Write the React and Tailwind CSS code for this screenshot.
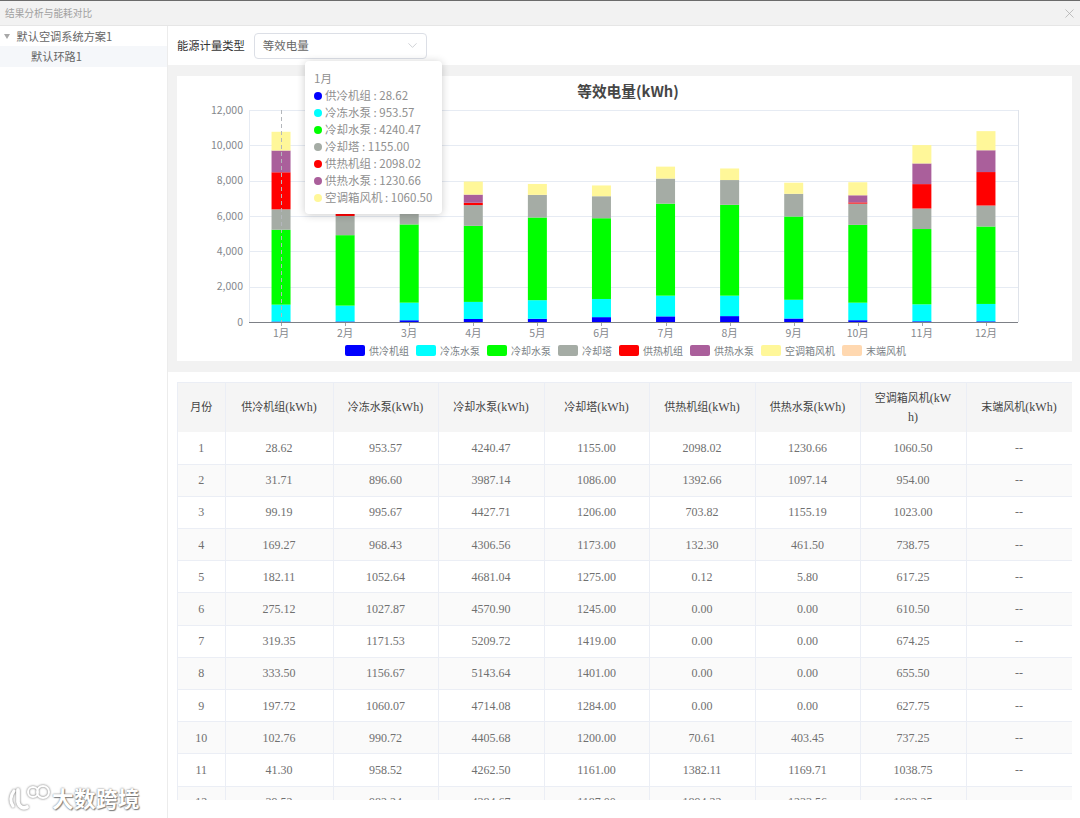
import { ChevronDown, X } from 'lucide-react';

const SANS = { fontFamily: '"Noto Sans CJK SC", "Noto Sans", sans-serif' };

const series = [
  { name: '供冷机组', color: '#0000ff' },
  { name: '冷冻水泵', color: '#00ffff' },
  { name: '冷却水泵', color: '#00ff00' },
  { name: '冷却塔', color: '#a5aca5' },
  { name: '供热机组', color: '#ff0000' },
  { name: '供热水泵', color: '#aa5f9b' },
  { name: '空调箱风机', color: '#fff799' },
  { name: '末端风机', color: '#ffd8b0' },
];

const rows = [
  ['1', '28.62', '953.57', '4240.47', '1155.00', '2098.02', '1230.66', '1060.50'],
  ['2', '31.71', '896.60', '3987.14', '1086.00', '1392.66', '1097.14', '954.00'],
  ['3', '99.19', '995.67', '4427.71', '1206.00', '703.82', '1155.19', '1023.00'],
  ['4', '169.27', '968.43', '4306.56', '1173.00', '132.30', '461.50', '738.75'],
  ['5', '182.11', '1052.64', '4681.04', '1275.00', '0.12', '5.80', '617.25'],
  ['6', '275.12', '1027.87', '4570.90', '1245.00', '0.00', '0.00', '610.50'],
  ['7', '319.35', '1171.53', '5209.72', '1419.00', '0.00', '0.00', '674.25'],
  ['8', '333.50', '1156.67', '5143.64', '1401.00', '0.00', '0.00', '655.50'],
  ['9', '197.72', '1060.07', '4714.08', '1284.00', '0.00', '0.00', '627.75'],
  ['10', '102.76', '990.72', '4405.68', '1200.00', '70.61', '403.45', '737.25'],
  ['11', '41.30', '958.52', '4262.50', '1161.00', '1382.11', '1169.71', '1038.75'],
  ['12', '39.52', '982.24', '4384.67', '1187.00', '1894.22', '1233.56', '1082.25'],
];

const headers = ['供冷机组', '冷冻水泵', '冷却水泵', '冷却塔', '供热机组', '供热水泵', '空调箱风机', '末端风机'];
const colWidths = [47, 108, 105, 106, 105, 106, 105, 106, 106];

/* chart coordinates are relative to the card */
const plot = { left: 72, right: 841, top: 34, bottom: 246 };
const ticks = [0, 2000, 4000, 6000, 8000, 10000, 12000];
const yOf = (v) => plot.bottom - (v / 12000) * (plot.bottom - plot.top);
const step = (plot.right - plot.left) / 12;

function BarChart() {
  return (
    <svg width="895" height="269" className="block" style={SANS}>
      <text x="451" y="21" textAnchor="middle" fontSize="14.7" fontWeight="700" fill="#464646">等效电量(kWh)</text>
      {ticks.map((t) => (
        <g key={t}>
          {t > 0 && <line x1={plot.left} x2={plot.right} y1={Math.round(yOf(t)) + 0.5} y2={Math.round(yOf(t)) + 0.5} stroke="#e6ebf3" />}
          <text x={plot.left - 6} y={yOf(t) + 3.5} textAnchor="end" fontSize="10.5" fill="#85888d">{t.toLocaleString('en-US')}</text>
        </g>
      ))}
      <line x1={plot.left + 0.5} x2={plot.left + 0.5} y1={plot.top} y2={plot.bottom} stroke="#e6ebf3" />
      <line x1={plot.right + 0.5} x2={plot.right + 0.5} y1={plot.top} y2={plot.bottom} stroke="#dfe3ea" />
      {rows.map((row, i) => {
        const cx = plot.left + step * (i + 0.5);
        let total = 0;
        return (
          <g key={row[0]}>
            {row.slice(1).map((val, k) => {
              const v = Number(val);
              const y1 = yOf(total);
              total += v;
              return <rect key={k} x={cx - 9.5} width="19" y={yOf(total)} height={y1 - yOf(total)} fill={series[k].color} />;
            })}
            <line x1={Math.round(cx) + 0.5} x2={Math.round(cx) + 0.5} y1={plot.bottom} y2={plot.bottom + 4} stroke="#a3a6ab" />
            <text x={cx} y={plot.bottom + 15} textAnchor="middle" fontSize="10.5" fill="#85888d">{row[0]}月</text>
          </g>
        );
      })}
      <line x1={plot.left} x2={plot.right} y1={plot.bottom + 0.5} y2={plot.bottom + 0.5} stroke="#7d8086" />
      <line x1={Math.round(plot.left + step / 2) + 0.5} x2={Math.round(plot.left + step / 2) + 0.5} y1={plot.top} y2={plot.bottom} stroke="#b4b7bc" strokeDasharray="4 3" />
    </svg>
  );
}

function Tooltip() {
  const values = rows[0].slice(1);
  return (
    <div className="absolute left-[137px] top-[35px] z-10 h-[153px] w-[137px] rounded-[4px] bg-white pl-[9px] pt-[9px] text-[11.5px] leading-[17px] text-[#8f8f8f] shadow-[0_1px_8px_rgba(0,0,0,0.2)]">
      <div>1月</div>
      {values.map((val, i) => (
        <div key={i} className="flex items-center whitespace-nowrap">
          <span className="mr-[3px] h-2 w-2 rounded-full" style={{ background: series[i].color }} />
          {series[i].name} : {val}
        </div>
      ))}
    </div>
  );
}

function Watermark() {
  return (
    <div className="absolute bottom-[6px] left-[9px] z-20 flex items-center gap-[1px]">
      <svg width="42" height="28" viewBox="0 0 42 28" fill="none" className="drop-shadow-[0_0_1px_rgba(90,90,90,0.9)]">
        <path d="M5 7 C1 12 1 18 4 22" stroke="#fff" strokeWidth="3.2" strokeLinecap="round" />
        <path d="M9 6 L9 18 C10 23 14 25 18 23" stroke="#fff" strokeWidth="3.8" strokeLinecap="round" />
        <circle cx="24" cy="8" r="5" stroke="#fff" strokeWidth="2" />
        <circle cx="34" cy="8" r="6" stroke="#fff" strokeWidth="2" />
      </svg>
      <span className="text-[21.5px] font-bold leading-none tracking-[0.5px] text-white [text-shadow:0_0_2px_#666,1px_1px_1px_#888]">大数跨境</span>
    </div>
  );
}

export default function App() {
  return (
    <div className="relative flex h-[818px] w-[1080px] flex-col overflow-hidden bg-white" style={SANS}>
      <div className="flex h-[26px] shrink-0 items-center justify-between border-t border-t-[#6b6b6b] border-b border-b-[#e6e6e6] bg-[#f2f2f2] pl-[5px] pr-[3px]">
        <span className="text-[9.7px] text-[#a0a0a0]">结果分析与能耗对比</span>
        <X size={15} strokeWidth={1.1} className="text-[#a8a8a8]" />
      </div>

      <div className="flex min-h-0 flex-1">
        <aside className="w-[168px] shrink-0 border-r border-[#ececec] text-[11.2px] text-[#666]">
          <div className="flex h-[20px] items-center pl-[4px]">
            <span className="mr-[6.5px] h-0 w-0 border-x-[3.5px] border-t-[5px] border-x-transparent border-t-[#a8a8a8]" />
            默认空调系统方案1
          </div>
          <div className="flex h-[21px] items-center bg-[#f5f7fa] pl-[31px]">默认环路1</div>
        </aside>

        <main className="relative flex min-w-0 flex-1 flex-col">
          <div className="flex h-[39px] shrink-0 items-center gap-[9px] pl-[9px]">
            <span className="text-[11.3px] text-[#333]">能源计量类型</span>
            <div className="flex h-[26px] w-[173px] items-center justify-between rounded-[4px] border border-[#dcdfe6] pl-[8px] pr-[6px] text-[11.5px] text-[#666]">
              等效电量
              <ChevronDown size={15} strokeWidth={1} className="text-[#b4b7bd]" />
            </div>
          </div>

          <div className="shrink-0 bg-[#f2f2f2] pb-[11px] pl-[9px] pr-[8px] pt-[11px]">
            <div className="h-[285px] bg-white">
              <BarChart />
              <div className="ml-[168px] flex items-center gap-[7px] text-[10px] leading-[11px] text-[#7b7f86]">
                {series.map((s) => (
                  <div key={s.name} className="flex items-center gap-[4px]">
                    <span className="h-[11px] w-5 rounded-[2px]" style={{ background: s.color }} />
                    {s.name}
                  </div>
                ))}
              </div>
            </div>
          </div>

          <div className="ml-[9px] mr-[8px] mt-[10px] h-[418px] overflow-hidden border-l border-t border-[#ebeef5]">
            <table className="w-[894px] table-fixed border-collapse text-center text-[12px] text-[#707070]" style={{ fontFamily: '"Liberation Serif", "Noto Sans CJK SC", serif' }}>
              <colgroup>
                {colWidths.map((w, i) => <col key={i} style={{ width: w }} />)}
              </colgroup>
              <thead>
                <tr className="h-[49px] bg-[#f5f5f5] text-[#444]">
                  <th className="border-r border-[#ebeef5] text-[11px] font-normal">月份</th>
                  {headers.map((h) => (
                    <th key={h} className="break-all border-r border-[#ebeef5] px-[10px] font-normal leading-[19px]">
                      <span className="text-[11px]">{h}</span>(kWh)
                    </th>
                  ))}
                </tr>
              </thead>
              <tbody>
                {rows.map((row, i) => (
                  <tr key={row[0]} className={i % 2 ? 'h-[32.2px] bg-[#fafafa]' : 'h-[32.2px] bg-white'}>
                    {row.map((val, k) => (
                      <td key={k} className="border-b border-r border-[#ebeef5]">{val}</td>
                    ))}
                    <td className="border-b border-r border-[#ebeef5]">--</td>
                  </tr>
                ))}
              </tbody>
            </table>
          </div>

          <Tooltip />
        </main>
      </div>

      <Watermark />
    </div>
  );
}
